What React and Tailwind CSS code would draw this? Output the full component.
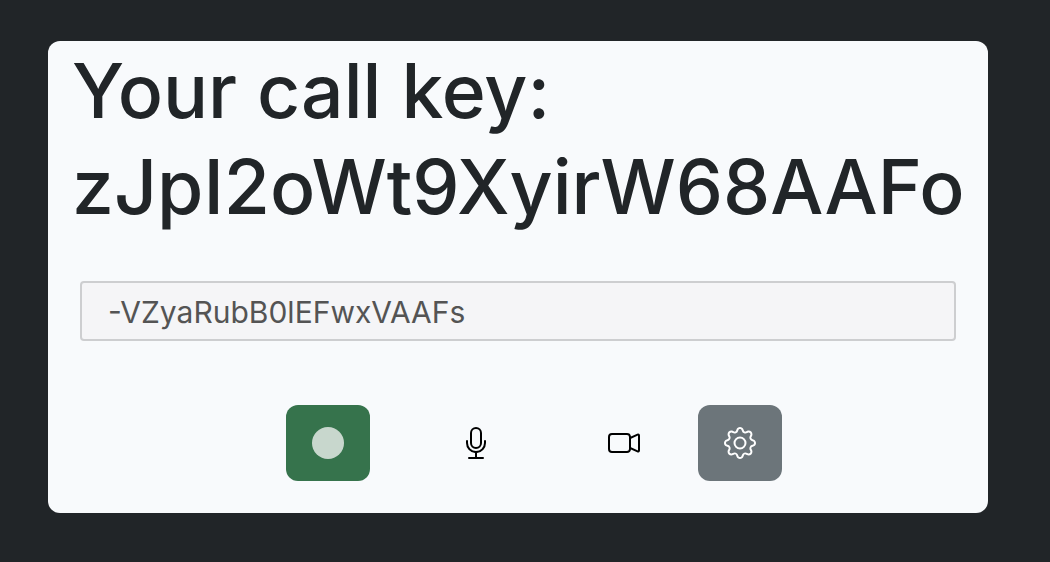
import { BsMic, BsCameraVideo, BsGear, BsCircleFill } from "react-icons/bs";

export default function App() {
  return (
    <main className="min-h-screen bg-[#212528] pt-[41px] pr-[62px] pb-12 pl-12 font-[Inter,sans-serif]">
      <section className="rounded-xl bg-[#f8fafc] px-6 pt-0.5 pb-8">
        <h1 className="text-[75px] leading-24 font-medium text-[#212528]">
          Your call key:
          <br />
          zJpI2oWt9XyirW68AAFo
        </h1>
        <div className="px-2 pt-[46px]">
          <input
            aria-label="Call key"
            defaultValue="-VZyaRubB0lEFwxVAAFs"
            className="block h-15 w-full rounded border-2 border-[#cdced0] bg-[#f5f5f7] px-[26px] pt-0.5 text-[30px] text-[#545454]"
          />
        </div>
        <div className="flex items-center justify-center gap-8 pt-16 pl-8 text-black">
          <button aria-label="Start call" className="flex h-19 w-21 items-center justify-center rounded-xl bg-[#36734c] text-[#c8d7cd]">
            <BsCircleFill size={32} />
          </button>
          <button aria-label="Microphone" className="ml-8 flex h-19 w-21 items-center justify-center rounded-xl">
            <BsMic size={32} />
          </button>
          <button aria-label="Camera" className="ml-8 flex h-19 w-21 items-center justify-center rounded-xl">
            <BsCameraVideo size={32} />
          </button>
          <button aria-label="Settings" className="flex h-19 w-21 items-center justify-center rounded-xl bg-[#6c757a] text-white">
            <BsGear size={32} />
          </button>
        </div>
      </section>
    </main>
  );
}
